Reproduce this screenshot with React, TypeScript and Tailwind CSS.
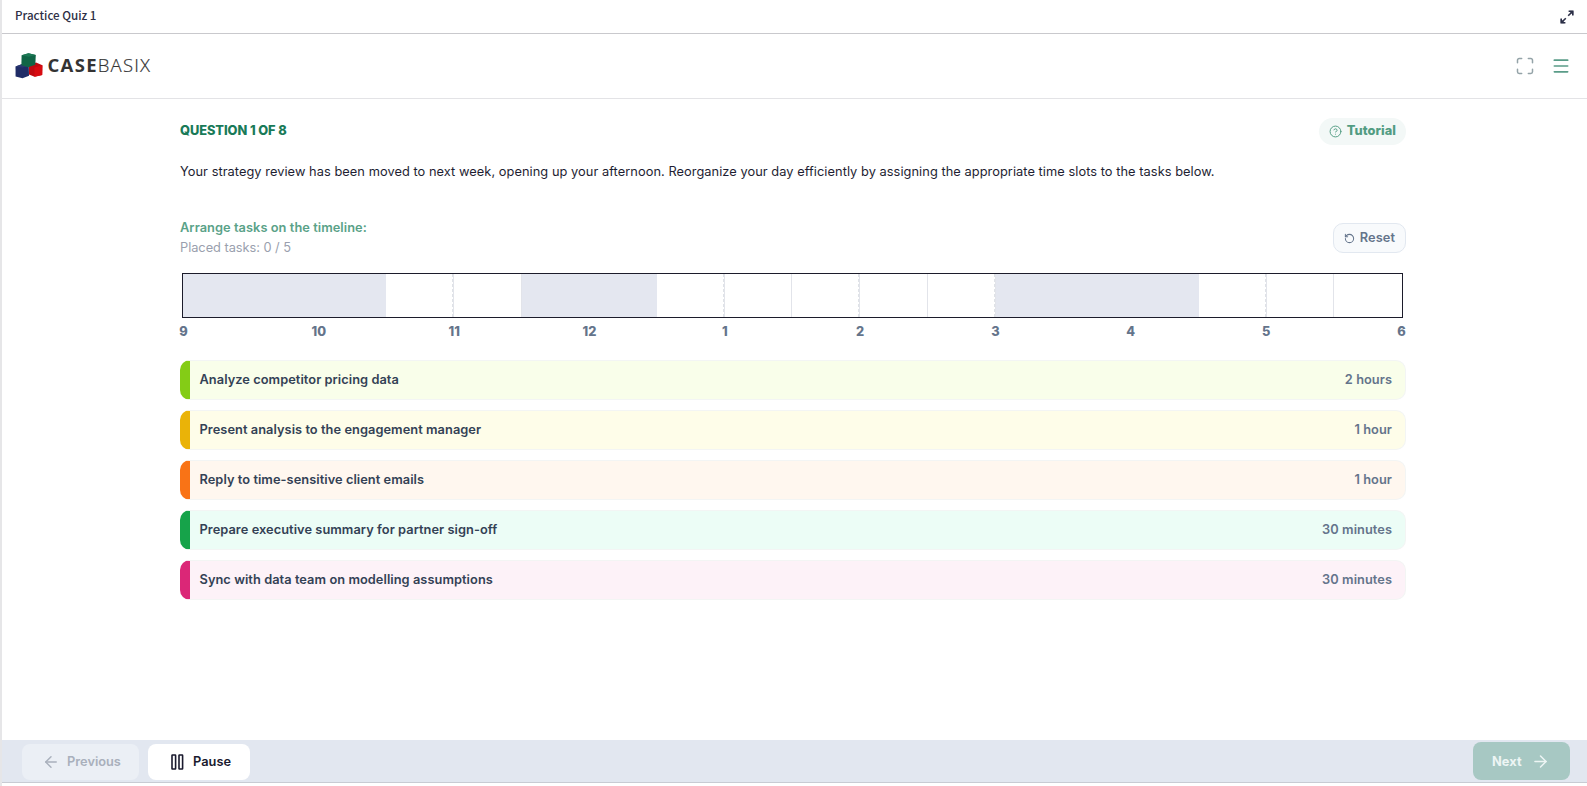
import { ArrowLeft, ArrowRight, CircleHelp, Maximize, Menu, RotateCcw } from 'lucide-react';
import clsx from 'clsx';

const TASKS = [
  { title: 'Analyze competitor pricing data', duration: '2 hours', className: 'bg-[#f9feea] border-l-[#84cc16]' },
  { title: 'Present analysis to the engagement manager', duration: '1 hour', className: 'bg-[#fefde9] border-l-[#eab308]' },
  { title: 'Reply to time-sensitive client emails', duration: '1 hour', className: 'bg-[#fff7ef] border-l-[#f97316]' },
  { title: 'Prepare executive summary for partner sign-off', duration: '30 minutes', className: 'bg-[#ecfdf6] border-l-[#16a34a]' },
  { title: 'Sync with data team on modelling assumptions', duration: '30 minutes', className: 'bg-[#fdf2f8] border-l-[#db2777]' },
];

const HOURS = ['9', '10', '11', '12', '1', '2', '3', '4', '5', '6'];

// half-hour slots that are already booked
const BUSY = [0, 1, 2, 5, 6, 12, 13, 14];

const Logo = () => (
  <div className="flex items-center">
    <svg width="28" height="26" viewBox="0 0 28 26">
      <path d="M0.5 13.4 6.6 11.2 13.8 13 14 22.8 7.5 25.2 0.6 23.6Z" fill="#1f2c66" />
      <path d="M0.5 13.4 7.4 14.6 13.8 13 6.6 11.2Z" fill="#2a3872" />
      <path d="M14 12.4 21 9.6 27.4 12.2 27.2 22 19.6 23.8 14 21.4Z" fill="#c00a10" />
      <path d="M19.4 14.4 27.4 12.2 27.2 22 19.6 23.8Z" fill="#d80b10" />
      <path d="M6.6 2.2 13.5 0.3 20.8 2 20.3 11.8 13.2 14.2 6.4 12.2Z" fill="#106546" />
      <path d="M6.6 2.2 13.6 3.8 20.8 2 13.5 0.3Z" fill="#1c7955" />
    </svg>
    <div className="mb-[2px] ml-[4.5px] font-['Open_Sans'] text-[18.5px] leading-6 text-[#333]">
      <span className="font-bold tracking-[1.3px]">CASE</span>
      <span className="font-light tracking-[1.2px] [-webkit-text-stroke:0.2px_#333]">BASIX</span>
    </div>
  </div>
);

const ExpandIcon = () => (
  <svg width="14" height="14" viewBox="0 0 14 14" fill="none" stroke="#2d3048" strokeWidth="1.6">
    <path d="M8.6 1.2h4.2v4.2M12.8 1.2 8.2 5.8M1.2 8.6v4.2h4.2M1.2 12.8l4.6-4.6" />
    <path d="M9.6 1.2h3.2v3.2ZM1.2 9.6v3.2h3.2Z" fill="#2d3048" strokeWidth="0.6" />
  </svg>
);

const Timeline = () => (
  <div>
    <div className="mx-[2px] flex h-[45px] w-[1221px] border border-[#1c1c2b]">
      {Array.from({ length: 18 }, (_, i) => (
        <div
          key={i}
          className={clsx(
            'flex flex-1 justify-end border-r last:border-r-transparent',
            BUSY.includes(i) ? 'border-[#e4e7f0] bg-[#e4e7f0]' : 'border-[#e2e4ea]',
          )}
        >
          {i % 2 === 1 && i < 17 && !BUSY.includes(i) && <div className="border-r border-dashed border-[#dfe2e7]" />}
        </div>
      ))}
    </div>
    <div className="ml-[3.5px] mt-[4px] flex w-[1218px] justify-between text-[12.8px] leading-5 font-extrabold text-[#64748b]">
      {HOURS.map(hour => (
        <span key={hour} className="flex w-0 justify-center">{hour}</span>
      ))}
    </div>
  </div>
);

export default function App() {
  return (
    <div className="flex h-[786px] flex-col border-l-2 border-[#e6e6e8] bg-white font-['Inter',sans-serif] text-[12.8px] leading-5 tracking-[0.058px]">
      <div className="flex h-[34px] items-center justify-between border-b border-[#c9c9cd] pr-[13px] pl-[13px]">
        <span className="mb-[3px] font-['Noto_Sans_CJK_SC',sans-serif] text-[11.6px] font-medium tracking-normal text-[#2d2f45]">Practice Quiz 1</span>
        <ExpandIcon />
      </div>

      <header className="flex h-[65px] items-center justify-between border-b border-[#e3e3e6] pr-[16px] pl-[13px]">
        <Logo />
        <div className="flex items-center gap-[16px]">
          <Maximize size={20} strokeWidth={1.8} color="#94a3a8" />
          <Menu size={20} strokeWidth={2} color="#5a9c88" />
        </div>
      </header>

      <main className="ml-[178px] w-[1226px] flex-1 pt-[18px]">
        <div className="flex h-[27px] items-center justify-between">
          <h1 className="mt-[1px] font-extrabold tracking-[-0.05px] text-[#197a58]">QUESTION 1 OF 8</h1>
          <button className="mt-[1px] flex h-[27px] items-center gap-[5px] rounded-full bg-[#f3f8f7] px-[10px] font-extrabold text-[#529c83]">
            <CircleHelp size={13} strokeWidth={1.8} />
            Tutorial
          </button>
        </div>
        <p className="mt-[18px] text-[#1e1e32]">
          Your strategy review has been moved to next week, opening up your afternoon. Reorganize your day efficiently by
          assigning the appropriate time slots to the tasks below.
        </p>

        <div className="mt-[36px] flex items-center justify-between">
          <div>
            <div className="font-semibold text-[#5aa288]">Arrange tasks on the timeline:</div>
            <div className="tracking-[-0.03px] text-[#9a9fae]">Placed tasks: 0 / 5</div>
          </div>
          <button className="flex h-[30px] items-center gap-[5px] rounded-[10px] border border-[#e2e8f0] bg-[#f8fafc] px-[10px] font-semibold text-[#64748b]">
            <RotateCcw size={11} strokeWidth={2.2} />
            Reset
          </button>
        </div>

        <div className="mt-[15px]">
          <Timeline />
        </div>

        <div className="mt-[18px] flex flex-col gap-[10px]">
          {TASKS.map(task => (
            <div
              key={task.title}
              className={clsx(
                'flex h-[40px] items-center justify-between rounded-[10px] border border-l-[10px] border-y-[#f3f5f4] border-r-[#f3f5f4] pr-[13px] pb-[1px] pl-[9.5px] font-semibold',
                task.className,
              )}
            >
              <span className="text-[#334155]">{task.title}</span>
              <span className="text-[#64748b]">{task.duration}</span>
            </div>
          ))}
        </div>
      </main>

      <footer className="mb-[3px] flex h-[43px] items-center justify-between border-b border-[#c8cbd3] bg-[#e2e7f0] pr-[17px] pl-[20px] font-semibold">
        <div className="mt-[1px] flex gap-[9px]">
          <button className="flex h-[36px] w-[117px] items-center gap-[7px] rounded-lg bg-[#ebeff5] pl-[20px] tracking-normal text-[#a9b0bc]">
            <ArrowLeft size={18} strokeWidth={1.9} />
            Previous
          </button>
          <button className="flex h-[36px] w-[102px] items-center gap-[9px] rounded-lg bg-white pl-[23px] text-[#1a1a2e]">
            <svg width="13" height="16" viewBox="0 0 13 16" fill="none" stroke="#1a1a2e" strokeWidth="1.6">
              <rect x="1" y="1" width="3.6" height="14" rx="0.4" />
              <rect x="8" y="1" width="3.6" height="14" rx="0.4" />
            </svg>
            Pause
          </button>
        </div>
        <button className="flex h-[38px] w-[97px] items-center gap-[9px] rounded-lg bg-[#a7c8c3] pt-[1px] pl-[19px] font-bold text-[#edf5f4]">
          Next
          <ArrowRight size={19} strokeWidth={1.9} />
        </button>
      </footer>
    </div>
  );
}
